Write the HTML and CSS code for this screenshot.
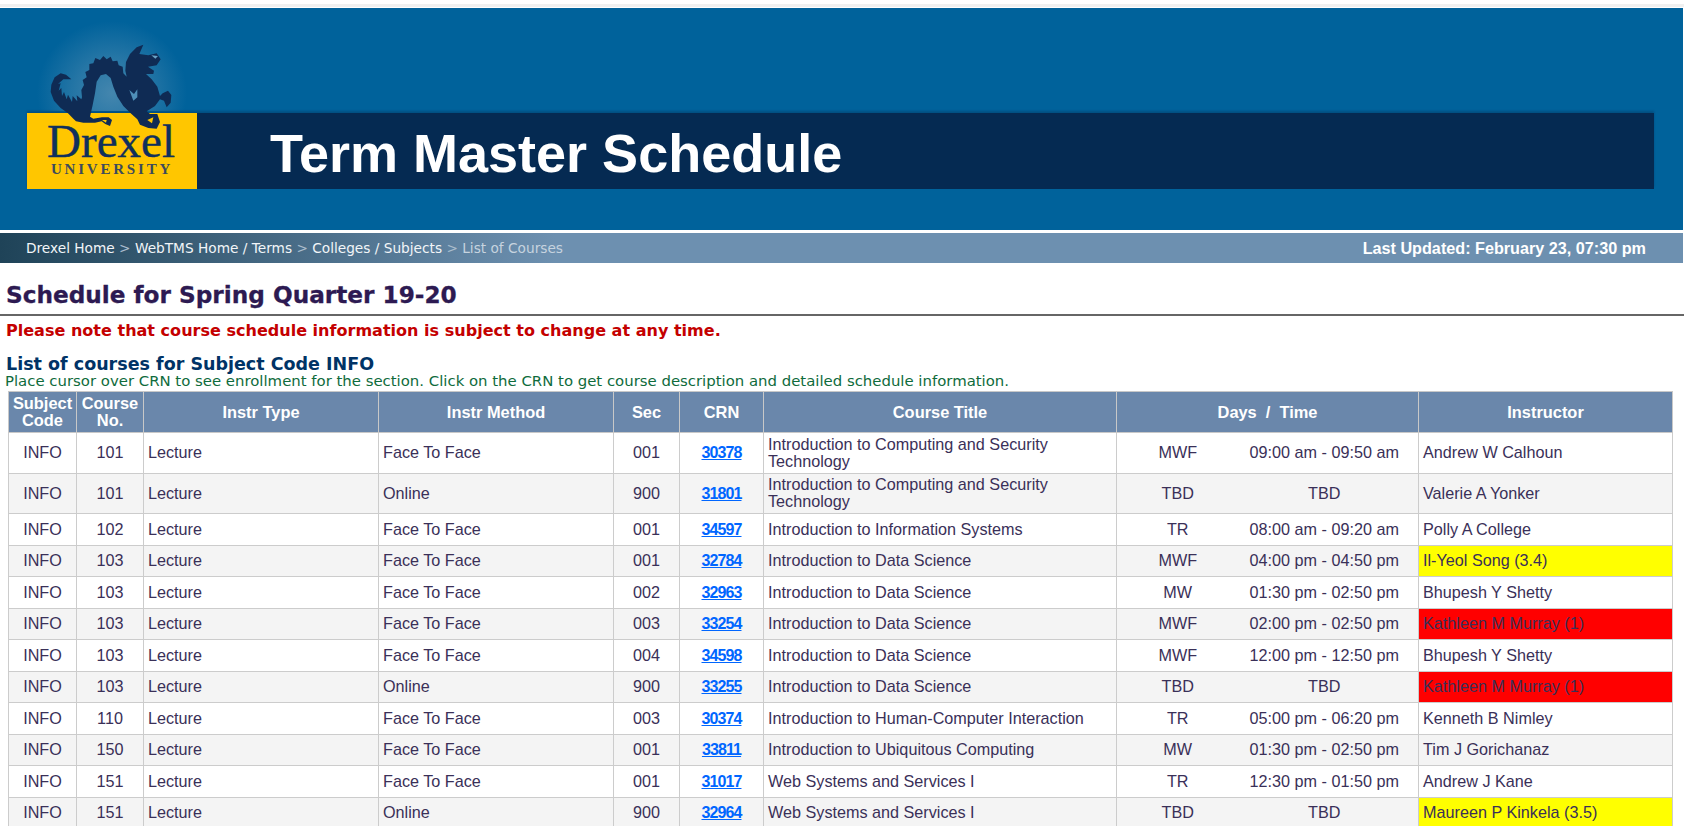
FILE: index.html
```html
<!DOCTYPE html>
<html lang="en">
<head>
  <meta charset="UTF-8">
  <title>Term Master Schedule</title>
  <link rel="stylesheet" href="styles.css">
</head>
<body>
  <div class="top-strip"></div>

  <div class="banner">
    <div class="banner-band">
      <div class="logo">
        <div class="glow"></div>
        <div class="logo-name">Drexel</div>
        <div class="logo-sub">UNIVERSITY</div>
        <svg class="dragon" viewBox="0 0 420 270">
          <path fill="#0f2b54" d="M94 118 L78 104 L62 100 L44 112 L34 134 L32 156 L42 182 L62 204 L84 220 L100 236 L108 244 L130 248 L165 248 L185 244 L196 252 L210 258 L216 240 L206 232 L186 232 L160 236 L150 230 L158 195 L165 160 L170 125 L182 106 L198 102 L212 114 L220 140 L232 170 L250 198 L272 220 L292 238 L300 254 L325 264 L350 266 L360 246 L352 222 L330 222 L320 214 L345 198 L360 178 L372 182 L380 202 L392 188 L394 165 L384 152 L368 160 L360 168 L352 140 L335 118 L318 102 L340 102 L342 92 L324 80 L350 76 L362 58 L350 40 L325 46 L298 42 L310 14 L290 22 L270 42 L258 66 L256 92 L260 110 L250 100 L248 80 L236 76 L232 62 L218 64 L212 50 L200 58 L190 48 L180 60 L166 54 L160 70 L148 72 L148 90 L136 96 L140 112 L128 120 L132 135 L124 150 L126 172 L124 178 L110 166 L112 184 L98 168 L96 186 L84 164 L80 178 L72 156 L66 168 L64 144 L56 152 L62 130 L54 132 L70 118 Z"/>
          <path fill="#4f8fb8" d="M268 150 L282 162 L292 148 L292 172 L280 182 Z"/>
          <path fill="#6aa3c6" d="M334 46 L354 48 L346 56 Z"/>
          <path fill="#ffc600" d="M322 240 L340 232 L336 250 Z"/>
          <path fill="#ffc600" d="M186 240 L200 240 L198 248 Z"/>
        </svg>
      </div>
      <h1 class="banner-title">Term Master Schedule</h1>
    </div>
  </div>

  <div class="crumbs">
    <div class="crumb-links">
      <a href="#">Drexel Home</a> <span class="sep">&gt;</span>
      <a href="#">WebTMS Home / Terms</a> <span class="sep">&gt;</span>
      <a href="#">Colleges / Subjects</a> <span class="sep">&gt;</span>
      <span class="current">List of Courses</span>
    </div>
    <div class="updated">Last Updated: February 23, 07:30 pm</div>
  </div>

  <h2 class="term-heading">Schedule for Spring Quarter 19-20</h2>
  <p class="notice">Please note that course schedule information is subject to change at any time.</p>
  <h3 class="list-heading">List of courses for Subject Code INFO</h3>
  <p class="hint">Place cursor over CRN to see enrollment for the section. Click on the CRN to get course description and detailed schedule information.</p>

  <table class="courses">
    <colgroup>
      <col class="c-subject"><col class="c-course"><col class="c-type"><col class="c-method"><col class="c-sec"><col class="c-crn"><col class="c-title"><col class="c-days"><col class="c-time"><col class="c-instr">
    </colgroup>
    <thead>
      <tr>
        <th>Subject<br>Code</th>
        <th>Course<br>No.</th>
        <th>Instr Type</th>
        <th>Instr Method</th>
        <th>Sec</th>
        <th>CRN</th>
        <th>Course Title</th>
        <th colspan="2">Days &nbsp;/&nbsp; Time</th>
        <th>Instructor</th>
      </tr>
    </thead>
    <tbody>
      <tr class="tall">
        <td class="mid">INFO</td><td class="mid">101</td><td>Lecture</td><td>Face To Face</td><td class="mid">001</td><td class="mid"><a href="#">30378</a></td>
        <td class="two-line">Introduction to Computing and Security Technology</td><td class="mid days">MWF</td><td class="mid time">09:00 am - 09:50 am</td><td>Andrew W Calhoun</td>
      </tr>
      <tr class="tall">
        <td class="mid">INFO</td><td class="mid">101</td><td>Lecture</td><td>Online</td><td class="mid">900</td><td class="mid"><a href="#">31801</a></td>
        <td class="two-line">Introduction to Computing and Security Technology</td><td class="mid days">TBD</td><td class="mid time">TBD</td><td>Valerie A Yonker</td>
      </tr>
      <tr>
        <td class="mid">INFO</td><td class="mid">102</td><td>Lecture</td><td>Face To Face</td><td class="mid">001</td><td class="mid"><a href="#">34597</a></td>
        <td>Introduction to Information Systems</td><td class="mid days">TR</td><td class="mid time">08:00 am - 09:20 am</td><td>Polly A College</td>
      </tr>
      <tr>
        <td class="mid">INFO</td><td class="mid">103</td><td>Lecture</td><td>Face To Face</td><td class="mid">001</td><td class="mid"><a href="#">32784</a></td>
        <td>Introduction to Data Science</td><td class="mid days">MWF</td><td class="mid time">04:00 pm - 04:50 pm</td><td class="rated-mid">Il-Yeol Song (3.4)</td>
      </tr>
      <tr>
        <td class="mid">INFO</td><td class="mid">103</td><td>Lecture</td><td>Face To Face</td><td class="mid">002</td><td class="mid"><a href="#">32963</a></td>
        <td>Introduction to Data Science</td><td class="mid days">MW</td><td class="mid time">01:30 pm - 02:50 pm</td><td>Bhupesh Y Shetty</td>
      </tr>
      <tr>
        <td class="mid">INFO</td><td class="mid">103</td><td>Lecture</td><td>Face To Face</td><td class="mid">003</td><td class="mid"><a href="#">33254</a></td>
        <td>Introduction to Data Science</td><td class="mid days">MWF</td><td class="mid time">02:00 pm - 02:50 pm</td><td class="rated-low">Kathleen M Murray (1)</td>
      </tr>
      <tr>
        <td class="mid">INFO</td><td class="mid">103</td><td>Lecture</td><td>Face To Face</td><td class="mid">004</td><td class="mid"><a href="#">34598</a></td>
        <td>Introduction to Data Science</td><td class="mid days">MWF</td><td class="mid time">12:00 pm - 12:50 pm</td><td>Bhupesh Y Shetty</td>
      </tr>
      <tr>
        <td class="mid">INFO</td><td class="mid">103</td><td>Lecture</td><td>Online</td><td class="mid">900</td><td class="mid"><a href="#">33255</a></td>
        <td>Introduction to Data Science</td><td class="mid days">TBD</td><td class="mid time">TBD</td><td class="rated-low">Kathleen M Murray (1)</td>
      </tr>
      <tr>
        <td class="mid">INFO</td><td class="mid">110</td><td>Lecture</td><td>Face To Face</td><td class="mid">003</td><td class="mid"><a href="#">30374</a></td>
        <td>Introduction to Human-Computer Interaction</td><td class="mid days">TR</td><td class="mid time">05:00 pm - 06:20 pm</td><td>Kenneth B Nimley</td>
      </tr>
      <tr>
        <td class="mid">INFO</td><td class="mid">150</td><td>Lecture</td><td>Face To Face</td><td class="mid">001</td><td class="mid"><a href="#">33811</a></td>
        <td>Introduction to Ubiquitous Computing</td><td class="mid days">MW</td><td class="mid time">01:30 pm - 02:50 pm</td><td>Tim J Gorichanaz</td>
      </tr>
      <tr>
        <td class="mid">INFO</td><td class="mid">151</td><td>Lecture</td><td>Face To Face</td><td class="mid">001</td><td class="mid"><a href="#">31017</a></td>
        <td>Web Systems and Services I</td><td class="mid days">TR</td><td class="mid time">12:30 pm - 01:50 pm</td><td>Andrew J Kane</td>
      </tr>
      <tr>
        <td class="mid">INFO</td><td class="mid">151</td><td>Lecture</td><td>Online</td><td class="mid">900</td><td class="mid"><a href="#">32964</a></td>
        <td>Web Systems and Services I</td><td class="mid days">TBD</td><td class="mid time">TBD</td><td class="rated-mid">Maureen P Kinkela (3.5)</td>
      </tr>
    </tbody>
  </table>
</body>
</html>
```

FILE: styles.css
```css
body {
  margin: 0;
  background: #fff;
  color: #3a3058;
  font-family: "Liberation Sans", Arial, sans-serif;
}

.top-strip {
  height: 4px;
  margin-bottom: 1px;
  border-bottom: 3px solid #f0f0f0;
}

/* Banner */
.banner {
  height: 222px;
  margin-right: 1px;
  padding-top: 105px;
  box-sizing: border-box;
  background: #00629b;
}

.banner-band {
  display: flex;
  align-items: center;
  height: 76px;
  margin: 0 29px 0 27px;
  background: #052a52;
  box-shadow: 0 -2px 2px rgba(5, 42, 82, 0.35);
}

.logo {
  position: relative;
  width: 170px;
  height: 76px;
  flex-shrink: 0;
  background: #ffc600;
  color: #10305c;
  text-align: center;
  font-family: "Liberation Serif", "Times New Roman", serif;
}

.glow {
  position: absolute;
  left: 10px;
  top: -92px;
  width: 150px;
  height: 90px;
  background: radial-gradient(ellipse 50% 80% at 50% 80%, #4486ae 0%, rgba(68, 134, 174, 0.55) 50%, rgba(0, 98, 155, 0) 100%);
}

.dragon {
  position: absolute;
  left: 13px;
  top: -73px;
  width: 140px;
  height: 90px;
  filter: blur(0.4px);
}

.logo-name {
  padding: 9px 2px 0 0;
  font-size: 47px;
  line-height: 38px;
  -webkit-text-stroke: 0.4px #10305c;
}

.logo-sub {
  margin-top: 2px;
  font-size: 15px;
  line-height: 15px;
  font-weight: bold;
  letter-spacing: 2.8px;
  color: #3c4a5c;
}

.banner-title {
  margin: 0 0 0 73px;
  padding-top: 4px;
  color: #fff;
  font-size: 54px;
  font-weight: bold;
  white-space: nowrap;
}

/* Breadcrumb bar */
.crumbs {
  display: flex;
  justify-content: space-between;
  align-items: center;
  height: 30px;
  margin: 3px 1px 0 0;
  padding: 0 37px 0 26px;
  background: linear-gradient(to right, #1f4358 0, #6d90b0 33%, #6d90b0 100%);
  font-family: "DejaVu Sans", Verdana, sans-serif;
  font-size: 13.7px;
}

.crumb-links a {
  color: #f2f5f8;
  text-decoration: none;
}

.sep {
  color: #a9bccd;
}

.current {
  color: #c6d3df;
}

.updated {
  color: #fff;
  font-family: "Liberation Sans", Arial, sans-serif;
  font-size: 16.2px;
  font-weight: bold;
}

/* Headings */
.term-heading {
  margin: 18px 0 0;
  padding: 0 0 6px 6px;
  border-bottom: 2px solid #666;
  color: #2d1a52;
  font-family: "DejaVu Sans", Verdana, sans-serif;
  font-size: 23.2px;
  font-weight: bold;
  line-height: 27px;
  -webkit-text-stroke: 0.3px #2d1a52;
}

.notice {
  margin: 6px 0 0 6px;
  color: #c40000;
  font-family: "DejaVu Sans", Verdana, sans-serif;
  font-size: 16.05px;
  font-weight: bold;
  line-height: 18px;
}

.list-heading {
  margin: 14px 0 0 6px;
  color: #003366;
  font-family: "DejaVu Sans", Verdana, sans-serif;
  font-size: 17.5px;
  font-weight: bold;
  line-height: 20px;
}

.hint {
  margin: 0 0 0 5px;
  color: #0f6b3c;
  font-family: "DejaVu Sans", Verdana, sans-serif;
  font-size: 14.9px;
  line-height: 15px;
}

/* Course table */
.courses {
  width: 1664px;
  margin: 2px 0 0 8px;
  border-collapse: collapse;
  table-layout: fixed;
  font-size: 16.2px;
}

.c-subject { width: 68px; }
.c-course { width: 67px; }
.c-type { width: 235px; }
.c-method { width: 235px; }
.c-sec { width: 66px; }
.c-crn { width: 84px; }
.c-title { width: 353px; }
.c-days { width: 122px; }
.c-time { width: 180px; }
.c-instr { width: 254px; }

.courses th {
  height: 40px;
  padding: 0;
  border: 1px solid #c8c8c8;
  background: #6a87ab;
  color: #fff;
  font-size: 16.4px;
  line-height: 17px;
}

.courses td {
  height: 30.5px;
  padding: 0 4px;
  border: 1px solid #ccc;
  line-height: 17px;
}

.courses tr.tall td {
  height: 39.5px;
}

.courses tbody tr:nth-child(even) {
  background: #f4f4f4;
}

.courses td.mid {
  text-align: center;
}

.courses td.days {
  border-right: none;
}

.courses td.time {
  padding-right: 12px;
  border-left: none;
}

.courses a {
  color: #0066ff;
  font-size: 16px;
  font-weight: bold;
  letter-spacing: -0.9px;
}

.rated-mid {
  background: #ffff00;
}

.rated-low {
  background: #ff0000;
}
```
